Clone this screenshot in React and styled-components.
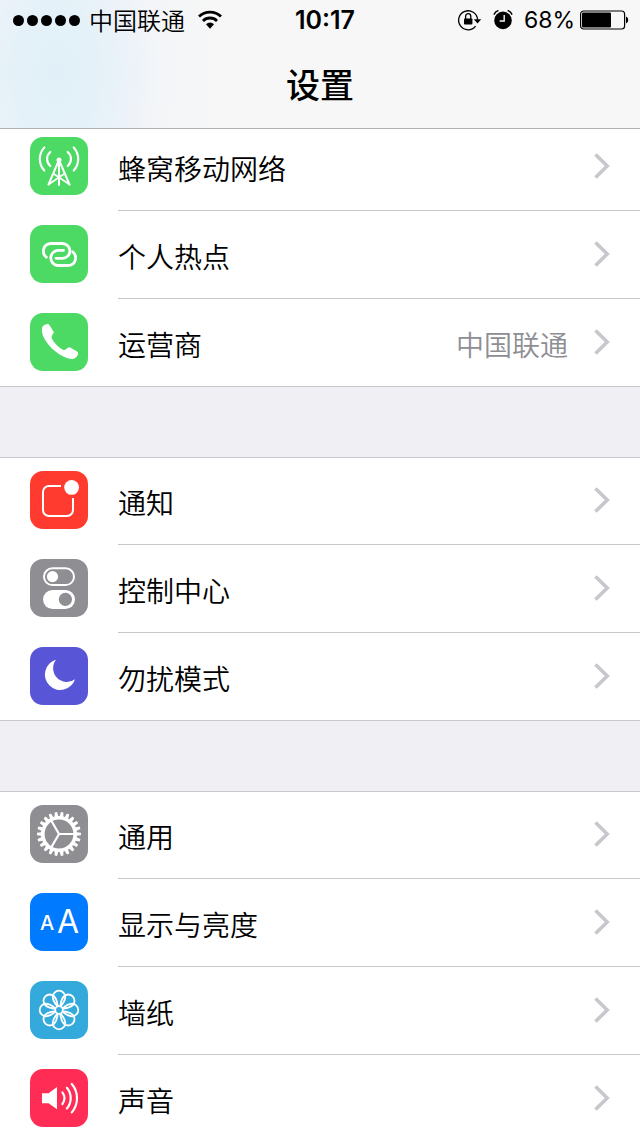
import React from 'react';
import styled, { createGlobalStyle } from 'styled-components';

const GlobalStyle = createGlobalStyle`
  * {
    box-sizing: border-box;
  }

  body {
    margin: 0;
    background: #efeff4;
    color: #000;
    font-family: Inter, 'Noto Sans CJK SC', sans-serif;
  }
`;

const TEETH = 22;

const gearPoints = Array.from({ length: TEETH }, (_, i) => {
    const step = (Math.PI * 2) / TEETH;
    return [[-0.36, 18], [-0.2, 22], [0.2, 22], [0.36, 18]].map(([offset, r]) => {
        const a = (i + offset) * step;
        return `${(29 + r * Math.cos(a)).toFixed(2)},${(29 + r * Math.sin(a)).toFixed(2)}`;
    }).join(' ');
}).join(' ');

const drawings = {
    cellular: (
        <g fill="none" stroke="#fff" strokeWidth="2.2" strokeLinecap="round">
            <path d="M20.3 15A9.2 9.2 0 0 0 20.3 29M37.7 15A9.2 9.2 0 0 1 37.7 29" />
            <path d="M14.3 10.5A17 17 0 0 0 14.3 33.5M43.7 10.5A17 17 0 0 1 43.7 33.5" />
            <path d="M29 23V48M28.6 24L18.5 47.5M29.4 24L39.5 47.5" strokeWidth="2" />
            <path d="M18.5 47.5L34 37M39.5 47.5L24 37" strokeWidth="1.6" />
            <circle cx="29" cy="23" r="1.4" fill="#fff" />
        </g>
    ),
    hotspot: (
        <g fill="none" stroke="#fff" strokeWidth="2.8" strokeLinecap="round">
            <path d="M16.3 32.2C11.5 28.5 12.5 18.5 21.5 18.5H32.5A7.4 7.4 0 0 1 32.5 33.3H26" />
            <path d="M42.7 26.8C47.5 30.5 46.5 40.5 37.5 40.5H27.5A7.6 7.6 0 0 1 27.5 25.4H33.5" />
        </g>
    ),
    phone: (
        <path
            fill="#fff"
            d="M12 15C12.4 12.8 15 11.2 17.2 10.9C18.4 10.8 19 11.2 19.6 12.2L24 19.4C22.9 21.3 21.3 22.6 21.6 24.4C22.4 28.3 29.6 35.7 33.6 36.9C35.2 37.3 36.7 35.3 38.4 34.4C39.2 34 39.9 34.2 40.7 34.7L47 38.4C48.1 39.1 48.3 39.8 48 41.1C47.4 43.7 45.6 45.6 43 46C38 46.7 30.8 43 24.3 37.6C18 32.3 13.4 25.5 12.3 20.3C11.9 18.4 11.8 16.5 12 15Z"
        />
    ),
    notifications: (
        <>
            <path
                fill="none"
                stroke="#fff"
                strokeWidth="2"
                d="M31 15H19A6 6 0 0 0 13 21V39A6 6 0 0 0 19 45H37A6 6 0 0 0 43 39V27"
            />
            <circle cx="41.6" cy="16.4" r="7.4" fill="#fff" />
        </>
    ),
    control: (
        <>
            <rect x="14" y="9.3" width="30" height="16.8" rx="8.4" fill="none" stroke="#fff" strokeWidth="2" />
            <circle cx="22.5" cy="17.6" r="5.6" fill="#fff" />
            <rect x="13" y="31" width="32" height="19" rx="9.5" fill="#fff" />
            <circle cx="35.4" cy="40.4" r="6.6" fill="#8e8e93" />
        </>
    ),
    moon: <path fill="#fff" d="M26 12.8A15.4 15.4 0 1 0 45 32.2A13.7 13.7 0 0 1 26 12.8Z" />,
    gear: (
        <>
            <polygon points={gearPoints} fill="#fff" />
            <circle cx="29" cy="29" r="14.4" fill="#8e8e93" />
            <path d="M29 29H44M29 29L21.5 16M29 29L21.5 42" stroke="#fff" strokeWidth="2.2" />
        </>
    ),
    display: (
        <g fill="#fff" fontFamily="Inter, sans-serif">
            <text x="10" y="37" fontSize="20" fontWeight="500">A</text>
            <text x="27" y="40" fontSize="32" fontWeight="400">A</text>
        </g>
    ),
    wallpaper: (
        <g fill="none" stroke="#fff" strokeWidth="1.8" strokeLinejoin="round">
            {[0, 45, 90, 135, 180, 225, 270, 315].map((angle) => (
                <path
                    key={angle}
                    d="M27.4 25.4Q23.2 20.8 22.7 16A6.3 6.3 0 1 1 35.3 16Q34.8 20.8 30.6 25.4"
                    transform={`rotate(${angle} 29 29)`}
                />
            ))}
            <circle cx="29" cy="29" r="3.8" />
        </g>
    ),
    sound: (
        <>
            <path fill="#fff" d="M12 24.2H18.6L27 18V40.2L18.6 34.2H12Z" />
            <g fill="none" stroke="#fff" strokeWidth="2.2" strokeLinecap="round">
                <path d="M32.4 23.3A10 10 0 0 1 32.4 35" />
                <path d="M36.9 18.8A16 16 0 0 1 36.9 39.5" />
                <path d="M41.8 15A22 22 0 0 1 41.8 43.4" />
            </g>
        </>
    ),
};

const groups = [
    [
        { icon: 'cellular', color: '#4cd964', label: '蜂窝移动网络' },
        { icon: 'hotspot', color: '#4cd964', label: '个人热点' },
        { icon: 'phone', color: '#4cd964', label: '运营商', value: '中国联通' },
    ],
    [
        { icon: 'notifications', color: '#ff3b30', label: '通知' },
        { icon: 'control', color: '#8e8e93', label: '控制中心' },
        { icon: 'moon', color: '#5856d6', label: '勿扰模式' },
    ],
    [
        { icon: 'gear', color: '#8e8e93', label: '通用' },
        { icon: 'display', color: '#007aff', label: '显示与亮度' },
        { icon: 'wallpaper', color: '#34aadc', label: '墙纸' },
        { icon: 'sound', color: '#ff2d55', label: '声音' },
    ],
];

const StatusBar = () => (
    <Status>
        <StatusSide>
            <Signal>
                {[1, 2, 3, 4, 5].map((n) => <Dot key={n} />)}
            </Signal>
            <Carrier>中国联通</Carrier>
            <svg width="24" height="20" viewBox="0 0 24 20">
                <g fill="none" stroke="#000" strokeWidth="2.8">
                    <path d="M1 6.6A15.6 15.6 0 0 1 23 6.6" />
                    <path d="M5 10.9A9.9 9.9 0 0 1 19 10.9" />
                </g>
                <path d="M8 14.2A5.7 5.7 0 0 1 16 14.2L12 18.8Z" />
            </svg>
        </StatusSide>
        <Time>10:17</Time>
        <StatusSide $end>
            <svg width="24" height="22" viewBox="0 0 24 22">
                <path d="M17.6 17.2A9.5 9.5 0 1 1 19.6 10.5" fill="none" stroke="#000" strokeWidth="1.3" />
                <path d="M15.8 10.2H23.2L19.5 14.4Z" />
                <rect x="6" y="9.4" width="8.4" height="6.2" rx="0.8" />
                <path d="M7.6 10V7.4A2.6 2.8 0 0 1 12.8 7.4V10" fill="none" stroke="#000" strokeWidth="1.3" />
            </svg>
            <svg width="20" height="22" viewBox="0 0 20 22">
                <circle cx="10" cy="11.4" r="8.8" />
                <path d="M0.9 5.6A7 7 0 0 1 5.4 1.5M19.1 5.6A7 7 0 0 0 14.6 1.5" fill="none" stroke="#000" strokeWidth="1.5" />
                <path d="M11.2 6V12H6.6" fill="none" stroke="#f7f7f7" strokeWidth="1.4" />
            </svg>
            <Power>
                <span>68%</span>
                <svg width="49" height="20" viewBox="0 0 49 20">
                    <rect x="0.6" y="1" width="44" height="18" rx="3" fill="none" stroke="#000" strokeWidth="1.2" />
                    <rect x="2" y="2.4" width="29" height="15.2" rx="1" />
                    <path d="M46 6.6A3.4 3.6 0 0 1 46 13.4Z" />
                </svg>
            </Power>
        </StatusSide>
    </Status>
);

const Item = ({ icon, color, label, value }) => (
    <li>
        <Row href="#">
            <Icon viewBox="0 0 58 58" $color={color} aria-hidden="true">
                {drawings[icon]}
            </Icon>
            <RowBody>
                <Label>{label}</Label>
                {value && <Value>{value}</Value>}
                <Chevron viewBox="0 0 16 26" aria-hidden="true">
                    <path d="M1.5 1.5L13.2 13L1.5 24.5" fill="none" stroke="#c7c7cc" strokeWidth="3.6" />
                </Chevron>
            </RowBody>
        </Row>
    </li>
);

const App = () => {
    return (
        <Screen>
            <GlobalStyle />
            <Header>
                <StatusBar />
                <Title>设置</Title>
            </Header>
            <Content>
                {groups.map((items, i) => (
                    <Group key={i}>
                        {items.map((item) => <Item key={item.label} {...item} />)}
                    </Group>
                ))}
            </Content>
        </Screen>
    )
}

const Screen = styled.div`
  display: flex;
  flex-direction: column;
  height: 100vh;
  overflow: hidden;
`;

const Header = styled.header`
  position: relative;
  z-index: 1;
  flex: none;
  border-bottom: 1px solid #b2b2b2;
  background: radial-gradient(170px 260px at 56px 72px, #e1f0f8 0, #e4f1f8 24%, #ecf2f9 42%, #f3f5f8 60%, #f7f7f7 100%);
`;

const Status = styled.div`
  display: grid;
  grid-template-columns: 1fr auto 1fr;
  align-items: center;
  height: 40px;
  padding: 0 11px 0 13px;
  font-size: 24px;
  line-height: 40px;
`;

const StatusSide = styled.div`
  display: flex;
  align-items: center;
  justify-content: ${({ $end }) => $end ? 'flex-end' : 'flex-start'};
  gap: ${({ $end }) => $end ? '11px' : '9px'};
`;

const Signal = styled.div`
  display: flex;
  gap: 3px;
`;

const Dot = styled.i`
  width: 11px;
  height: 11px;
  border-radius: 50%;
  background: #000;
`;

const Carrier = styled.span`
  margin-right: 4px;
  font-family: 'Noto Sans CJK SC', sans-serif;
  font-weight: 350;
`;

const Time = styled.time`
  padding-left: 8px;
  font-size: 25px;
  font-weight: 600;
`;

const Power = styled.div`
  display: flex;
  align-items: center;
  gap: 5px;
  font-size: 23px;
`;

const Title = styled.h1`
  margin: 0;
  padding-top: 4px;
  font-size: 34px;
  line-height: 84px;
  font-weight: 500;
  text-align: center;
`;

const Content = styled.main`
  flex: 1;
  min-height: 0;
  margin-top: -6px;
  overflow-y: auto;
  scrollbar-width: none;
`;

const Group = styled.ul`
  margin: 0 0 70px;
  padding: 0;
  list-style: none;
  background: #fff;
  box-shadow: inset 0 1px #c8c7cc, inset 0 -1px #c8c7cc;
`;

const Row = styled.a`
  display: flex;
  align-items: center;
  height: 88px;
  padding-left: 30px;
  color: inherit;
  text-decoration: none;
`;

const Icon = styled.svg`
  flex: none;
  width: 58px;
  height: 58px;
  margin: 0 30px 2px 0;
  border-radius: 13px;
  background: ${({ $color }) => $color};
`;

const RowBody = styled.div`
  display: flex;
  flex: 1;
  align-items: center;
  height: 100%;
  padding-right: 30px;
  border-bottom: 1px solid #c8c7cc;
  font-family: 'Noto Sans CJK SC', sans-serif;
  font-size: 28px;
  font-weight: 350;

  li:last-child & {
    border-bottom-color: transparent;
  }
`;

const Label = styled.span`
  flex: 1;
  padding-top: 2px;
`;

const Value = styled.span`
  margin-right: 26px;
  padding-top: 2px;
  color: #8e8e93;
`;

const Chevron = styled.svg`
  width: 16px;
  height: 26px;
  margin-bottom: 2px;
`;

export default App;
